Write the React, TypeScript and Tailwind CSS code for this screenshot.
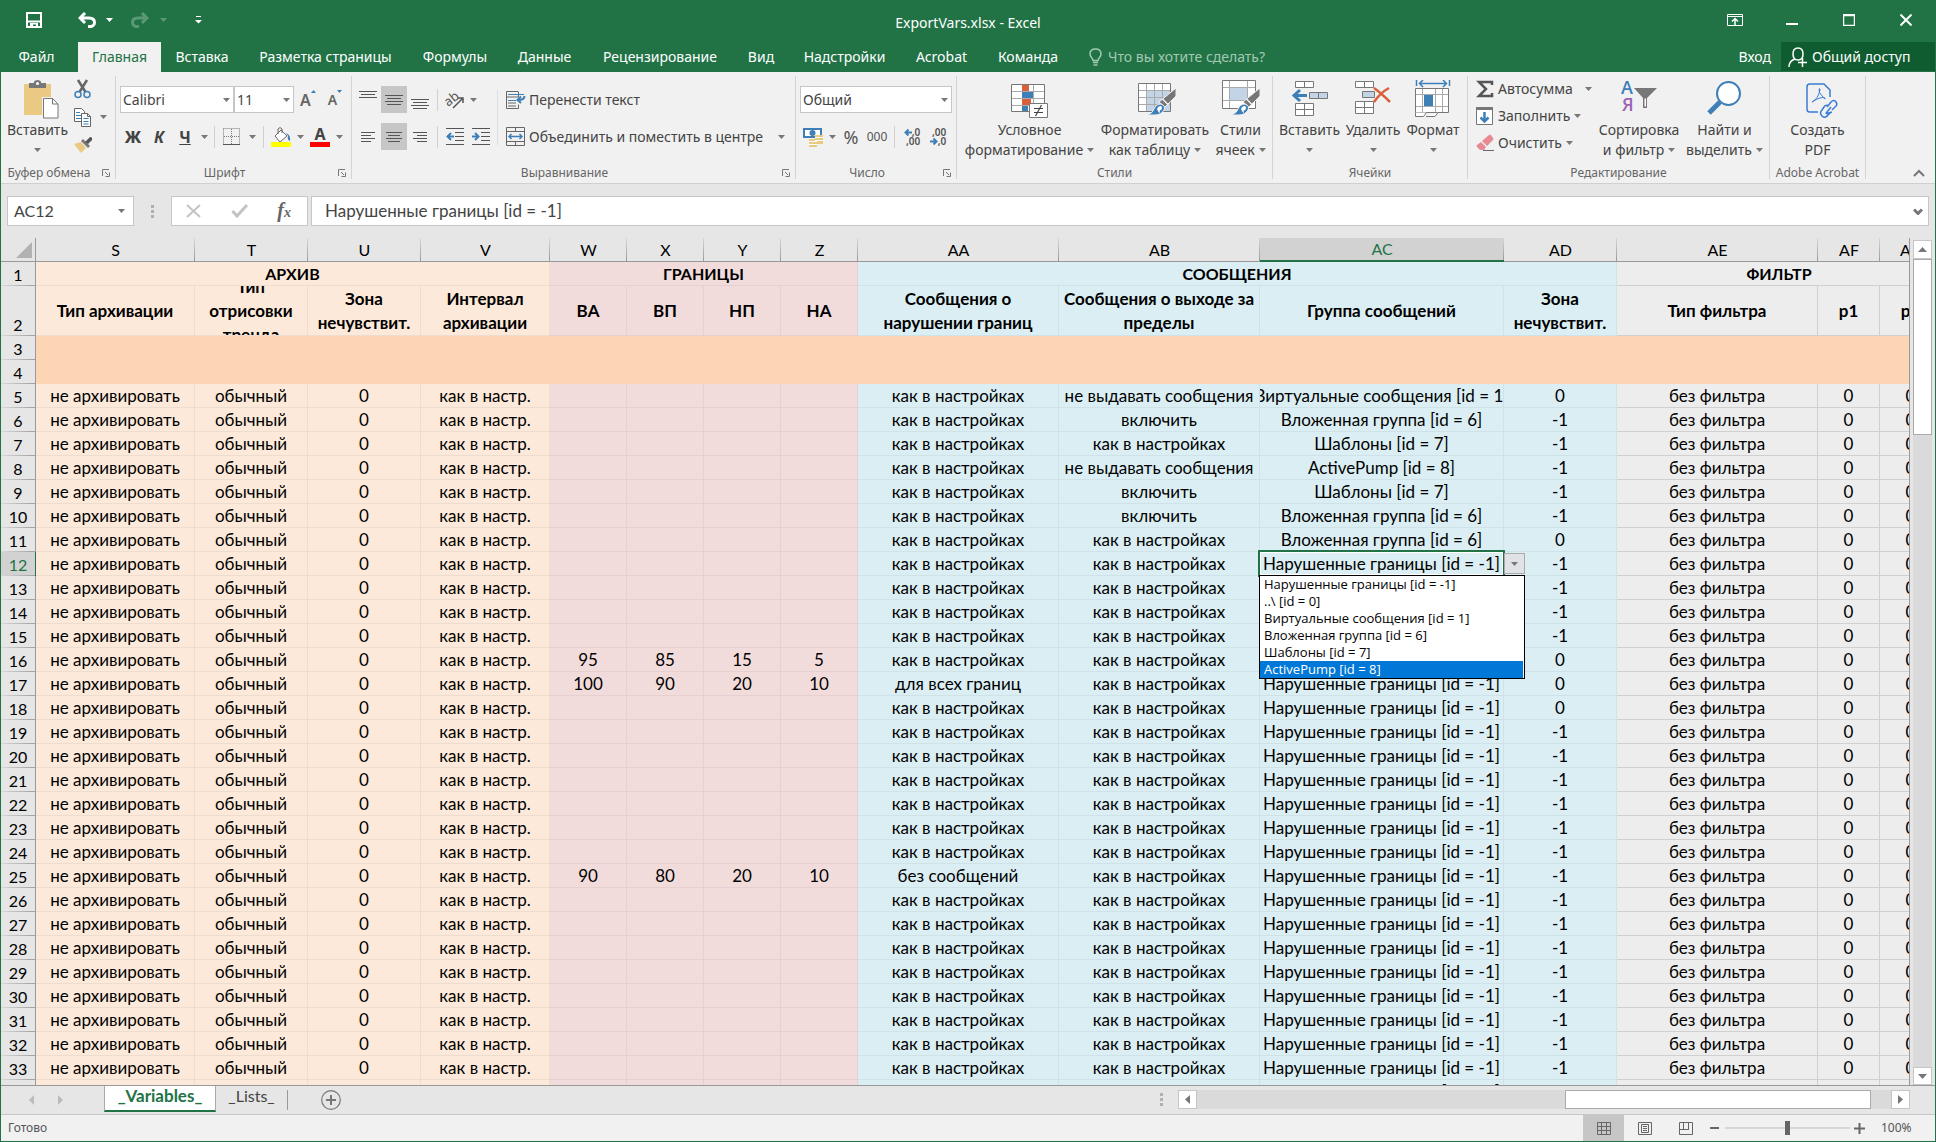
import React from 'react';

const columns = [
  { name: 'S', width: 159, tone: 'archive' },
  { name: 'T', width: 113, tone: 'archive' },
  { name: 'U', width: 113, tone: 'archive' },
  { name: 'V', width: 129, tone: 'archive' },
  { name: 'W', width: 77, tone: 'limits' },
  { name: 'X', width: 77, tone: 'limits' },
  { name: 'Y', width: 77, tone: 'limits' },
  { name: 'Z', width: 77, tone: 'limits' },
  { name: 'AA', width: 201, tone: 'messages' },
  { name: 'AB', width: 201, tone: 'messages' },
  { name: 'AC', width: 244, tone: 'messages' },
  { name: 'AD', width: 113, tone: 'messages' },
  { name: 'AE', width: 201, tone: 'filter' },
  { name: 'AF', width: 62, tone: 'filter' },
  { name: 'AG', width: 62, tone: 'filter' }
];

const tones: Record<string, string> = {
  archive: 'bg-[#fde9d9] border-[#eedccf]',
  limits: 'bg-[#f2dcdb] border-[#e6d1d0]',
  messages: 'bg-[#daeef3] border-[#cfe2e7]',
  filter: 'bg-[#ededed] border-[#d0d0d0]'
};

const groups = [
  { title: 'АРХИВ', span: 4, tone: 'archive' },
  { title: 'ГРАНИЦЫ', span: 4, tone: 'limits' },
  { title: 'СООБЩЕНИЯ', span: 4, tone: 'messages' },
  { title: 'ФИЛЬТР', span: 3, tone: 'filter' }
];

const titles = [
  'Тип архивации', 'Тип отрисовки тренда', 'Зона нечувствит.', 'Интервал архивации',
  'ВА', 'ВП', 'НП', 'НА',
  'Сообщения о нарушении границ', 'Сообщения о выходе за пределы', 'Группа сообщений', 'Зона нечувствит.',
  'Тип фильтра', 'p1', 'p2'
];

const broken = 'Нарушенные границы [id = -1]';
const virtual = 'Виртуальные сообщения [id = 1]';
const nested = 'Вложенная группа [id = 6]';
const templates = 'Шаблоны [id = 7]';
const pump = 'ActivePump [id = 8]';
const options = [broken, '..\\ [id = 0]', virtual, nested, templates, pump];

type Row = { limits?: string[]; aa?: string; ab?: string; ac?: string; ad?: string };

const overrides: Record<number, Row> = {
  5: { ab: 'не выдавать сообщения', ac: virtual, ad: '0' },
  6: { ab: 'включить', ac: nested },
  7: { ac: templates },
  8: { ab: 'не выдавать сообщения', ac: pump },
  9: { ab: 'включить', ac: templates },
  10: { ab: 'включить', ac: nested },
  11: { ac: nested, ad: '0' },
  16: { limits: ['95', '85', '15', '5'], ad: '0' },
  17: { limits: ['100', '90', '20', '10'], aa: 'для всех границ', ad: '0' },
  18: { ad: '0' },
  25: { limits: ['90', '80', '20', '10'], aa: 'без сообщений' }
};

const rows = Array.from({ length: 30 }, (_, i) => {
  const number = i + 5;
  const row = overrides[number] || {};
  return {
    number,
    cells: [
      'не архивировать', 'обычный', '0', 'как в настр.',
      ...(row.limits || ['', '', '', '']),
      row.aa || 'как в настройках',
      row.ab || 'как в настройках',
      row.ac || broken,
      row.ad || '-1',
      'без фильтра', '0', '0'
    ]
  };
});

const tabs = [
  { name: 'Вставка', width: 'w-[82px]' },
  { name: 'Разметка страницы', width: 'w-[165px]' },
  { name: 'Формулы', width: 'w-[94px]' },
  { name: 'Данные', width: 'w-[85px]' },
  { name: 'Рецензирование', width: 'w-[146px]' },
  { name: 'Вид', width: 'w-[56px]' },
  { name: 'Надстройки', width: 'w-[111px]' },
  { name: 'Acrobat', width: 'w-[83px]' },
  { name: 'Команда', width: 'w-[90px]' }
];

function Caret({ className = 'text-[#777]' }: { className?: string }) {
  return (
    <svg viewBox="0 0 7 4" className={`w-[7px] h-1 shrink-0 ${className}`} fill="currentColor">
      <path d="M0 0h7L3.5 4z" />
    </svg>
  );
}

function CaretButton({ label, width }: { label: string; width: string }) {
  return (
    <button aria-label={label} className={`h-full flex items-center justify-center ${width}`}>
      <Caret />
    </button>
  );
}

function Tool({ label, width = 'w-[26px]', active, children }: { label: string; width?: string; active?: boolean; children: React.ReactNode }) {
  return (
    <button
      aria-label={label}
      className={`h-full shrink-0 flex items-center justify-center ${width} ${active ? 'bg-[#c6c6c6]' : ''}`}
    >
      {children}
    </button>
  );
}

function Divider() {
  return <div className="w-px h-[22px] mx-1 bg-[#d0d0d0]"></div>;
}

function Combo({ label, value, className }: { label: string; value: string; className: string }) {
  return (
    <div className={`relative ${className}`}>
      <select aria-label={label} className="appearance-none w-full h-full bg-white border border-[#c6c6c6] pl-[2px] text-sm text-[#444]">
        <option>{value}</option>
      </select>
      <div className="absolute right-1 top-0 h-full flex items-center pointer-events-none">
        <Caret />
      </div>
    </div>
  );
}

function Group({ title, width, launcher, children }: { title: string; width: string; launcher?: boolean; children: React.ReactNode }) {
  return (
    <>
      <div className={`shrink-0 flex flex-col ${width}`}>
        <div className="h-[91px] flex">{children}</div>
        <div className="h-5 flex items-center text-xs text-[#666] whitespace-nowrap">
          <div className="flex-1 text-center">{title}</div>
          {launcher && (
            <button aria-label={`${title}: параметры`} className="w-[18px] shrink-0 flex justify-center">
              <svg viewBox="0 0 8 8" className="size-2" fill="none" stroke="#777">
                <path d="M.5 7V.5H7M3 3l3 3M7.5 3.500v4h-4" />
              </svg>
            </button>
          )}
        </div>
      </div>
      <div className="w-px my-1 shrink-0 bg-[#d4d4d4]"></div>
    </>
  );
}

function BigButton({ lines, width, caret = true, children }: { lines: string[]; width: string; caret?: boolean; children: React.ReactNode }) {
  return (
    <button className={`h-[91px] pt-2 shrink-0 flex flex-col items-center text-sm leading-5 text-[#444] whitespace-nowrap ${width}`}>
      <span className="h-10 flex items-start">{children}</span>
      <span>{lines[0]}</span>
      <span className="h-5 flex items-center gap-1">
        {lines[1]}
        {caret && <Caret />}
      </span>
    </button>
  );
}

function Lines({ rows: widths, y = 0, gap = 3, align = 'center' }: { rows: number[]; y?: number; gap?: number; align?: string }) {
  const x = (w: number) => (align === 'left' ? 2 : align === 'right' ? 16 - w : (18 - w) / 2);
  return (
    <svg viewBox="0 0 18 18" className="size-[18px]" stroke="#555">
      {widths.map((w, i) => (
        <path key={i} d={`M${x(w)} ${y + i * gap + 0.5}h${w}`} />
      ))}
    </svg>
  );
}

function PasteIcon() {
  return (
    <svg viewBox="0 0 35 39" className="w-[35px] h-[39px]">
      <path d="M0 4h27v31H0z" fill="#eac982" />
      <path d="M5 8V3h5V1.500Q11 0 13.500 0T17 1.500V3h5v5z" fill="#777" />
      <circle cx="13.500" cy="3.500" r="1.500" fill="#fff" />
      <path d="M18 17h10.500l6 6v15H18z" fill="#f1f1f1" />
      <path d="M19.500 18.500h9l5.500 5.500v14H19.500z" fill="#fff" stroke="#777" />
      <path d="M28.500 18.500V24H34" fill="none" stroke="#777" />
    </svg>
  );
}

function CutIcon() {
  return (
    <svg viewBox="0 0 18 20" className="w-[18px] h-5" fill="none">
      <path d="M4 1l7.500 12M13 1L5.500 13" stroke="#666" strokeWidth="2.500" />
      <circle cx="4" cy="15.500" r="3" stroke="#3e7fb8" strokeWidth="1.500" />
      <circle cx="13" cy="15.500" r="3" stroke="#3e7fb8" strokeWidth="1.500" />
    </svg>
  );
}

function CopyIcon() {
  return (
    <svg viewBox="0 0 18 19" className="w-[18px] h-[19px]" fill="#fff" stroke="#666">
      <path d="M.5.500h7l3 3v10H.5z" />
      <path d="M2 4.500h4M2 7.500h5M2 10.500h5" stroke="#3e7fb8" />
      <path d="M7.500 5.500h6l3 3v10h-9z" />
      <path d="M13.500 5.500v3h3" fill="none" />
      <path d="M9.500 10.500h5M9.500 13.500h5M9.500 16h5" stroke="#3e7fb8" />
    </svg>
  );
}

function PainterIcon() {
  return (
    <svg viewBox="0 0 18 16" className="w-[18px] h-4">
      <path d="M0 7l7-2 5 6-5 5z" fill="#eac982" />
      <path d="M7 4l2-2 7 7-2 2z" fill="#777" />
      <path d="M11 5l4-4q2-2 3 0t-1 3l-3 3z" fill="#555" />
    </svg>
  );
}

function BrushOverlay() {
  return (
    <g>
      <path d="M38 8v8L27 27l-6-5z" fill="#777" stroke="#f1f1f1" />
      <path d="M24.500 19l6 6" stroke="#f1f1f1" strokeWidth="1.500" />
      <path d="M9 35q6-2 7-6 2-5 7-5 5 2 3 6-3 5-9 5z" fill="#3e7fb8" stroke="#f1f1f1" />
      <path d="M19 29q1-3 4-3 2 2 0 4-2 0-1 3-2-1-3-4z" fill="#fff" />
    </g>
  );
}

function ConditionalIcon() {
  return (
    <svg viewBox="0 0 38 38" className="w-[38px] h-[38px]">
      <path d="M.5 4.500h33v27H.5z" fill="#fff" stroke="#777" />
      <path d="M1 11.500h32M1 18.500h32M1 25.500h32M11.500 5v26M22.500 5v26" stroke="#aaa" />
      <path d="M11 5h7v6h-7zM11 19h9v6h-9z" fill="#d9603b" />
      <path d="M11 12h11v6H11zM11 26h6v5h-6z" fill="#3e7fb8" />
      <path d="M18.500 23.500h18v14h-18z" fill="#fff" stroke="#777" />
      <path d="M23 28.500h9M23 32.500h9M30.500 25l-6 11" stroke="#444" strokeWidth="1.200" />
    </svg>
  );
}

function FormatTableIcon() {
  return (
    <svg viewBox="0 0 38 38" className="w-[38px] h-[38px]">
      <path d="M.5 3.500h32v28H.5z" fill="#fff" stroke="#777" />
      <path d="M9 11h23v20H9z" fill="#c3d4e7" />
      <path d="M1 10.500h31M1 17.500h31M1 24.500h31M8.500 4v27M16.500 4v27M24.500 4v27" stroke="#aaa" />
      <BrushOverlay />
    </svg>
  );
}

function CellStylesIcon() {
  return (
    <svg viewBox="0 0 38 38" className="w-[38px] h-[38px]">
      <path d="M.5.500h33v28H.5z" fill="#fff" stroke="#777" />
      <path d="M1 7.500h32M1 20.500h32M7.500 1v27M25.500 1v27" stroke="#aaa" />
      <path d="M8 8h17v12H8z" fill="#c3d4e7" />
      <BrushOverlay />
    </svg>
  );
}

function InsertIcon() {
  return (
    <svg viewBox="0 0 36 38" className="w-9 h-[38px]" fill="#fff" stroke="#777">
      <path d="M3.500 1.500h18v6h-18zM12.500 1.500v6M3.500 23.500h18v12h-18zM12.500 23.500v12M3.500 29.500h18" />
      <path d="M17.500 12.500h18v6h-18zM26.500 12.500v6" fill="#c3d4e7" />
      <path d="M15 15.500H2M8 10l-6 5.500L8 21" fill="none" stroke="#3e7fb8" strokeWidth="3" />
    </svg>
  );
}

function DeleteIcon() {
  return (
    <svg viewBox="0 0 36 38" className="w-9 h-[38px]" fill="#fff" stroke="#777">
      <path d="M.5 1.500h18v6H.5zM9.500 1.500v6M.5 21.500h18v12H.5zM9.500 21.500v12M.5 27.500h18" />
      <path d="M7.500 11.500h12v6h-12z" fill="#c3d4e7" />
      <path d="M19 8q7 5 16 14M34 8q-9 5-15 14" fill="none" stroke="#d9603b" strokeWidth="2.500" />
    </svg>
  );
}

function FormatIcon() {
  return (
    <svg viewBox="0 0 36 38" className="w-9 h-[38px]" fill="#fff">
      <path d="M1.500 0v6M34.500 0v6M4 3.500h28M8 0L4.500 3.500 8 7M28 0l3.500 3.500L28 7" fill="none" stroke="#3e7fb8" strokeWidth="1.500" />
      <path d="M.5 8.500h33v24H.5z" stroke="#777" />
      <path d="M1 14.500h32M1 26.500h32M7.500 9v23M20.500 9v23M27.500 9v23" stroke="#aaa" />
      <path d="M9 15h9v11H9z" fill="#3e7fb8" />
      <path d="M.5 32.500v4h8l3-4M11 36.500h9l3-4" stroke="#777" />
    </svg>
  );
}

function SortIcon() {
  return (
    <svg viewBox="0 0 36 36" className="w-9 h-9">
      <g fontFamily="Open Sans, sans-serif" fontWeight="600" fontSize="18">
        <text x="0" y="14" fill="#3e7fb8">А</text>
        <text x="1" y="31" fill="#9b66b5">Я</text>
      </g>
      <path d="M13 8h23L26 18v10h-4V18z" fill="#777" />
      <path d="M23.500 18.500h1.500v8h-1.500z" fill="#fff" />
    </svg>
  );
}

function FindIcon() {
  return (
    <svg viewBox="0 0 35 36" className="w-[35px] h-9">
      <path d="M13 22L2 33" stroke="#3e7fb8" strokeWidth="5" />
      <circle cx="21.500" cy="13.500" r="11.500" fill="#fff" stroke="#3e7fb8" strokeWidth="2" />
    </svg>
  );
}

function PdfIcon() {
  return (
    <svg viewBox="0 0 32 38" className="w-8 h-[38px]" fill="none" stroke="#3a7bd5" strokeWidth="1.500">
      <path d="M12 32H3.500Q1 32 1 29V7q0-3 2.500-3H18l6 6v7" />
      <path d="M6 22q6-3 8-12 0-2-1-1-1 3 4 8 3 3 2 1-4-2-13 4z" strokeWidth="1" />
      <path d="M21 27l4-5q3-3 5 0t-1 5l-3 3M25 27l-4 5q-3 3 5 0M23 26q-3-2-5 1l-2 3q-3 3 0 6t6-1l2-2" />
    </svg>
  );
}

function TitleBar() {
  return (
    <div className="h-[42px] grid grid-cols-[1fr_auto_1fr] text-white">
      <div className="flex items-center pl-[25px] pb-[2px]">
        <button aria-label="Сохранить">
          <svg viewBox="0 0 16 16" className="size-4" fill="none" stroke="currentColor" strokeWidth="2">
            <path d="M1 1h14v14H1zM2 9.500h12" />
            <path d="M4 11h8v4h-2v-2.500H7V15H4z" fill="currentColor" stroke="none" />
          </svg>
        </button>
        <button aria-label="Отменить" className="ml-9">
          <svg viewBox="0 0 18 16" className="w-[18px] h-4" fill="none" stroke="currentColor" strokeWidth="3">
            <path d="M1.500 6H11q5.500 0 5.500 4.500T10 14.500M7 1L2 6l5 5" />
          </svg>
        </button>
        <button aria-label="Список отмены" className="ml-[10px]"><Caret className="text-white" /></button>
        <button aria-label="Вернуть" className="ml-[18px] text-[#5a9876]">
          <svg viewBox="0 0 18 16" className="w-[18px] h-4" fill="none" stroke="currentColor" strokeWidth="3">
            <path d="M16.500 6H7q-5.500 0-5.500 4.500T8 14.500M11 1l5 5-5 5" />
          </svg>
        </button>
        <button aria-label="Список возврата" className="ml-[11px]"><Caret className="text-[#5a9876]" /></button>
        <button aria-label="Настройка панели" className="ml-7">
          <svg viewBox="0 0 7 8" className="w-[7px] h-2" fill="currentColor">
            <path d="M1 0h5v1H1zM0 4h7L3.500 7.500z" />
          </svg>
        </button>
      </div>
      <div className="pt-[13px] text-sm leading-5">ExportVars.xlsx - Excel</div>
      <div className="flex items-center justify-end pr-[23px] pb-[2px]">
        <button aria-label="Параметры ленты" className="mr-[43px]">
          <svg viewBox="0 0 16 12" className="w-4 h-3" fill="none" stroke="currentColor">
            <path d="M.5.500h15v11H.5zM0 2.500h16" />
            <path d="M8 11V5M5 7.500L8 4.500l3 3" strokeWidth="1.500" />
          </svg>
        </button>
        <button aria-label="Свернуть" className="mr-[45px]">
          <svg viewBox="0 0 12 12" className="size-3"><path d="M0 9h12v2H0z" fill="currentColor" /></svg>
        </button>
        <button aria-label="Развернуть" className="mr-[45px]">
          <svg viewBox="0 0 12 12" className="size-3"><path d="M.5.500h11v11H.5zM0 1.500h12" fill="none" stroke="currentColor" strokeWidth="1.500" /></svg>
        </button>
        <button aria-label="Закрыть">
          <svg viewBox="0 0 12 12" className="size-3"><path d="M.5.500l11 11M11.500.500l-11 11" stroke="currentColor" strokeWidth="2" /></svg>
        </button>
      </div>
    </div>
  );
}

function TabBar() {
  return (
    <div className="h-[30px] flex text-sm text-white whitespace-nowrap">
      <button className="w-[77px] pr-[6px]">Файл</button>
      <button className="w-[83px] bg-[#f1f1f1] text-[#217346]">Главная</button>
      {tabs.map((tab) => (
        <button key={tab.name} className={`shrink-0 ${tab.width}`}>{tab.name}</button>
      ))}
      <button className="ml-4 flex items-center gap-[6px] text-[#a3c9b2]">
        <svg viewBox="0 0 13 18" className="w-[13px] h-[18px]" fill="none" stroke="currentColor" strokeWidth="1.500">
          <path d="M4 12.500Q4 11 2.500 9.500 1 8 1 6q0-5 5.500-5T12 6q0 2-1.500 3.500T9 12.500zM4 14.500h5M4.500 17h4" />
        </svg>
        Что вы хотите сделать?
      </button>
      <div className="flex-1"></div>
      <button className="px-[10px]">Вход</button>
      <button className="w-[154px] mb-px pl-[7px] flex items-center gap-1 bg-[#0e5c2f]">
        <svg viewBox="0 0 20 20" className="size-5" fill="none" stroke="currentColor" strokeWidth="1.500">
          <path d="M5 7q0-6 5-6t5 6-5 6-5-6M1 20q0-6 6-8M10 15.500h9M14.500 11v9" />
        </svg>
        Общий доступ
      </button>
    </div>
  );
}

function Ribbon() {
  return (
    <div className="flex bg-[#f1f1f1] border-b border-[#d0d0d0]">
      <Group title="Буфер обмена" width="w-[114px]" launcher>
        <BigButton lines={['Вставить', '']} width="w-[73px]">
          <span className="pl-2"><PasteIcon /></span>
        </BigButton>
        <div className="flex flex-col pt-[3px]">
          <button aria-label="Вырезать" className="h-7 flex items-center"><CutIcon /></button>
          <button aria-label="Копировать" className="h-7 flex items-center gap-2"><CopyIcon /><Caret /></button>
          <button aria-label="Формат по образцу" className="h-7 flex items-center"><PainterIcon /></button>
        </div>
      </Group>

      <Group title="Шрифт" width="w-[235px]" launcher>
        <div className="pt-[14px] pl-1 flex flex-col gap-[10px]">
          <div className="h-[27px] flex">
            <Combo label="Шрифт" value="Calibri" className="w-[114px]" />
            <Combo label="Размер шрифта" value="11" className="w-[60px]" />
            <Tool label="Увеличить размер" width="w-7">
              <span className="text-base font-semibold text-[#666]">A</span>
              <svg viewBox="0 0 5 16" className="w-[5px] h-4 mb-1"><path d="M0 3h5L2.500 0z" fill="#3e7fb8" /></svg>
            </Tool>
            <Tool label="Уменьшить размер">
              <span className="text-sm font-semibold text-[#666]">A</span>
              <svg viewBox="0 0 5 16" className="w-[5px] h-4 mb-1"><path d="M0 0h5L2.500 3z" fill="#3e7fb8" /></svg>
            </Tool>
          </div>
          <div className="h-[27px] flex items-center text-base text-[#444]">
            <Tool label="Полужирный"><b className="font-extrabold">Ж</b></Tool>
            <Tool label="Курсив"><b className="italic">К</b></Tool>
            <Tool label="Подчеркнутый"><b className="underline">Ч</b></Tool>
            <CaretButton label="Виды подчеркивания" width="w-3" />
            <Divider />
            <Tool label="Границы">
              <svg viewBox="0 0 18 18" className="size-[18px]" fill="none" stroke="#777">
                <path d="M.5.500h16v16M.5.500v16M8.500 1v16M1 8.500h16" strokeDasharray="1 1" />
                <path d="M0 16.500h17" stroke="#555" />
              </svg>
            </Tool>
            <CaretButton label="Виды границ" width="w-[14px]" />
            <Divider />
            <Tool label="Цвет заливки">
              <svg viewBox="0 0 20 20" className="size-5">
                <path d="M4 9l6-6 6 6-7 6z" fill="#fff" stroke="#666" />
                <path d="M7 7V2q2-3 4 0v4" fill="none" stroke="#666" />
                <path d="M15 6q5 2 4 8-3-1-2-5z" fill="#3e7fb8" />
                <path d="M0 15h20v5H0z" fill="#ff0" />
              </svg>
            </Tool>
            <CaretButton label="Выбор заливки" width="w-3" />
            <Tool label="Цвет текста" width="w-7">
              <span className="flex flex-col items-center">
                <span className="text-base leading-[15px] font-bold">A</span>
                <span className="w-5 h-[5px] bg-[#f00]"></span>
              </span>
            </Tool>
            <CaretButton label="Выбор цвета текста" width="w-[10px]" />
          </div>
        </div>
      </Group>

      <Group title="Выравнивание" width="w-[443px]" launcher>
        <div className="pt-[14px] pl-[3px] flex flex-col gap-[10px]">
          <div className="h-[27px] flex items-center">
            <Tool label="По верхнему краю"><Lines rows={[18, 14, 18]} /></Tool>
            <Tool label="По середине" active><Lines rows={[18, 14, 18, 14]} y={4} /></Tool>
            <Tool label="По нижнему краю"><Lines rows={[18, 14, 18, 14]} y={8} /></Tool>
            <Divider />
            <Tool label="Ориентация">
              <svg viewBox="0 0 20 18" className="w-5 h-[18px]" fill="none" stroke="#555" strokeWidth="1.500">
                <text x="0" y="13" fontSize="13" fill="#555" stroke="none" transform="rotate(-38 6 10)">ab</text>
                <path d="M8 17L18 7M13 7h5v5" />
              </svg>
            </Tool>
            <CaretButton label="Виды ориентации" width="w-[10px]" />
          </div>
          <div className="h-[27px] flex items-center">
            <Tool label="По левому краю"><Lines rows={[14, 10, 14, 10]} y={4} align="left" /></Tool>
            <Tool label="По центру" active><Lines rows={[16, 12, 16, 12]} y={4} /></Tool>
            <Tool label="По правому краю"><Lines rows={[14, 10, 14, 10]} y={4} align="right" /></Tool>
            <Divider />
            <Tool label="Уменьшить отступ">
              <svg viewBox="0 0 18 17" className="w-[18px] h-[17px]" fill="none" stroke="#555">
                <path d="M0 .500h18M9 4.500h9M9 8.500h9M9 12.500h9M0 16.500h18" />
                <path d="M8 8.500H1.500M5 5L1.500 8.500 5 12" stroke="#3e7fb8" strokeWidth="2" />
              </svg>
            </Tool>
            <Tool label="Увеличить отступ">
              <svg viewBox="0 0 18 17" className="w-[18px] h-[17px]" fill="none" stroke="#555">
                <path d="M0 .500h18M9 4.500h9M9 8.500h9M9 12.500h9M0 16.500h18" />
                <path d="M0 8.500h6.500M3 5l3.500 3.500L3 12" stroke="#3e7fb8" strokeWidth="2" />
              </svg>
            </Tool>
          </div>
        </div>
        <div className="w-px h-[55px] mt-[18px] mr-2 ml-[3px] bg-[#dcdfe8]"></div>
        <div className="pt-[14px] flex flex-col gap-[10px] text-sm text-[#444] whitespace-nowrap">
          <button className="h-[27px] flex items-center gap-[3px]">
            <svg viewBox="0 0 20 18" className="w-5 h-[18px]" fill="none" stroke="#666">
              <path d="M12 .500H.5v17h12v-4M.5 6h12V.500M2 12h8M2 15h8" />
              <path d="M2 3.500h16M2 9.500h8" stroke="#3e7fb8" />
              <path d="M18.500 5q0 4-6 4M15 5.500l-3.500 3.500 3.500 3" stroke="#3e7fb8" strokeWidth="2" />
            </svg>
            Перенести текст
          </button>
          <div className="h-[27px] flex items-center gap-3">
            <button className="flex items-center gap-[3px]">
              <svg viewBox="0 0 20 19" className="w-5 h-[19px]" fill="none" stroke="#666">
                <path d="M.5.500h18v18H.5zM0 4.500h19M0 14.500h19M9.500 0v4M9.500 15v4" />
                <path d="M3 9.500h13M5.500 7L3 9.500 5.500 12M13.500 7L16 9.500 13.500 12" stroke="#3e7fb8" strokeWidth="1.500" />
              </svg>
              Объединить и поместить в центре
            </button>
            <CaretButton label="Виды объединения" width="w-3" />
          </div>
        </div>
      </Group>

      <Group title="Число" width="w-[160px]" launcher>
        <div className="pt-[14px] pl-1 flex flex-col gap-[10px]">
          <div className="h-[27px]">
            <Combo label="Числовой формат" value="Общий" className="w-[152px] h-full" />
          </div>
          <div className="h-[27px] flex items-center text-[#555]">
            <Tool label="Финансовый формат">
              <svg viewBox="0 0 20 20" className="size-5">
                <path d="M0 1h19v10H0z" fill="#3e7fb8" />
                <path d="M2 3h15v6H2z" fill="#fff" />
                <circle cx="9.500" cy="6" r="3" fill="#3e7fb8" />
                <path d="M12 8h8v9h-6v3H6v-8h6z" fill="#eac982" />
                <path d="M12 10.500h8M12 13.500h8M6 14.500h8M6 17.500h8" stroke="#fff" />
              </svg>
            </Tool>
            <CaretButton label="Выбор валюты" width="w-3" />
            <Tool label="Процентный формат"><span className="text-lg">%</span></Tool>
            <Tool label="Формат с разделителями"><span className="text-xs">000</span></Tool>
            <Divider />
            <Tool label="Увеличить разрядность">
              <span className="flex flex-col items-end text-[10px] leading-[9px] font-semibold">
                <span className="flex items-center">
                  <svg viewBox="0 0 8 7" className="w-2 h-[7px]" fill="none" stroke="#3e7fb8" strokeWidth="2"><path d="M8 3.500H1.500M4.500.500l-3 3 3 3" /></svg>
                  ,0
                </span>
                <span>,00</span>
              </span>
            </Tool>
            <Tool label="Уменьшить разрядность">
              <span className="flex flex-col items-end text-[10px] leading-[9px] font-semibold">
                <span>,00</span>
                <span className="flex items-center">
                  <svg viewBox="0 0 8 7" className="w-2 h-[7px]" fill="none" stroke="#3e7fb8" strokeWidth="2"><path d="M0 3.500h6.500M3.500.500l3 3-3 3" /></svg>
                  ,0
                </span>
              </span>
            </Tool>
          </div>
        </div>
      </Group>

      <Group title="Стили" width="w-[315px]">
        <div className="pl-[3px] flex">
          <BigButton lines={['Условное', 'форматирование']} width="w-[139px]"><ConditionalIcon /></BigButton>
          <BigButton lines={['Форматировать', 'как таблицу']} width="w-[112px]"><span className="pl-1"><FormatTableIcon /></span></BigButton>
          <BigButton lines={['Стили', 'ячеек']} width="w-[59px]"><CellStylesIcon /></BigButton>
        </div>
      </Group>

      <Group title="Ячейки" width="w-[194px]">
        <div className="pl-1 flex">
          <BigButton lines={['Вставить', '']} width="w-[65px]"><InsertIcon /></BigButton>
          <BigButton lines={['Удалить', '']} width="w-[62px]"><DeleteIcon /></BigButton>
          <BigButton lines={['Формат', '']} width="w-[58px]"><FormatIcon /></BigButton>
        </div>
      </Group>

      <Group title="Редактирование" width="w-[301px]">
        <div className="w-[128px] pl-2 pt-[3px] shrink-0 flex flex-col text-sm text-[#444]">
          <button className="h-[27px] flex items-center gap-1">
            <svg viewBox="0 0 18 18" className="size-[18px]" fill="none" stroke="#555" strokeWidth="2.500">
              <path d="M16 5V2H3l7 7-7 7h13v-3" />
            </svg>
            Автосумма
            <span className="ml-2"><Caret /></span>
          </button>
          <button className="h-[27px] flex items-center gap-1">
            <svg viewBox="0 0 18 18" className="size-[18px]">
              <path d="M.5.500h16v17H.5z" fill="#fff" stroke="#777" />
              <path d="M0 0h17v3H0z" fill="#777" />
              <path d="M8.500 5v9M4.500 10.500l4 4 4-4" fill="none" stroke="#3e7fb8" strokeWidth="2.500" />
            </svg>
            Заполнить
            <Caret />
          </button>
          <button className="h-[27px] flex items-center gap-1">
            <svg viewBox="0 0 18 18" className="size-[18px]">
              <path d="M6 7l7-6q1-1 2 0l2 3q1 1 0 2l-6 6z" fill="#e88a94" />
              <path d="M5 8l5 5-2 3H4l-3-3q-1-1 0-2z" fill="#e88a94" />
              <path d="M7 16.500h11" stroke="#666" />
            </svg>
            Очистить
            <Caret />
          </button>
        </div>
        <BigButton lines={['Сортировка', 'и фильтр']} width="w-[86px]"><SortIcon /></BigButton>
        <BigButton lines={['Найти и', 'выделить']} width="w-[85px]"><FindIcon /></BigButton>
      </Group>

      <Group title="Adobe Acrobat" width="w-[95px]">
        <BigButton lines={['Создать', 'PDF']} width="w-full" caret={false}><span className="pl-2"><PdfIcon /></span></BigButton>
      </Group>

      <button aria-label="Свернуть ленту" className="ml-auto mr-[10px] mb-[6px] self-end">
        <svg viewBox="0 0 12 8" className="w-3 h-2" fill="none" stroke="#777" strokeWidth="2">
          <path d="M1 7l5-5 5 5" />
        </svg>
      </button>
    </div>
  );
}

function FormulaBar() {
  return (
    <div className="flex items-stretch h-[54px] py-3 pl-[6px] pr-[6px]">
      <div className="w-[127px] flex items-center bg-white border border-[#c6c6c6]">
        <input aria-label="Имя ячейки" defaultValue="AC12" className="min-w-0 flex-1 pl-[6px] text-base text-[#444] font-[Lato,sans-serif]" />
        <CaretButton label="Список имен" width="w-6" />
      </div>
      <div className="w-[37px] flex flex-col items-center justify-center gap-[2px]">
        <i className="size-[3px] bg-[#b0b0b0]"></i>
        <i className="size-[3px] bg-[#b0b0b0]"></i>
        <i className="size-[3px] bg-[#b0b0b0]"></i>
      </div>
      <div className="w-[137px] pl-[13px] pr-4 flex items-center justify-between bg-white border border-[#c6c6c6]">
        <button aria-label="Отмена">
          <svg viewBox="0 0 18 14" className="w-[18px] h-[14px]"><path d="M2 1l13 12M15 1L2 13" stroke="#c3c3c3" strokeWidth="2" /></svg>
        </button>
        <button aria-label="Ввод">
          <svg viewBox="0 0 18 14" className="w-[18px] h-[14px]" fill="none"><path d="M1.500 7l4.500 5L16 1" stroke="#c3c3c3" strokeWidth="3" /></svg>
        </button>
        <button aria-label="Вставить функцию" className="font-['Liberation_Serif',serif] italic font-bold text-xl leading-5 text-[#666]">
          f<span className="text-sm">x</span>
        </button>
      </div>
      <div className="flex-1 ml-[3px] flex items-center bg-white border border-[#c6c6c6]">
        <input aria-label="Строка формул" defaultValue={broken} className="flex-1 pl-[13px] text-[17px] text-[#444] font-[Lato,sans-serif]" />
        <button aria-label="Развернуть строку формул" className="w-[15px]">
          <svg viewBox="0 0 10 7" className="w-[10px] h-[7px]" fill="none" stroke="#777" strokeWidth="3"><path d="M1 1.500l4 4 4-4" /></svg>
        </button>
      </div>
    </div>
  );
}

function RowHeader({ number, selected }: { number: number; selected?: boolean }) {
  return (
    <th
      scope="row"
      className={`relative p-0 align-bottom text-base leading-[23px] font-normal border-r after:absolute after:inset-x-0 after:bottom-0 after:h-px after:bg-linear-to-r after:from-[#d8d8d8] after:to-[#a0a0a0] ${
        selected ? 'bg-[#d2d2d2] text-[#217346] border-[#217346]' : 'bg-[#e6e6e6] border-[#999]'
      }`}
    >
      {number}
    </th>
  );
}

function ActiveCell() {
  return (
    <>
      <div className="absolute -inset-[2px] border-2 border-[#217346] pointer-events-none">
        <div className="h-full border border-white"></div>
      </div>
      <button aria-label="Открыть список" className="absolute left-[calc(100%+1px)] top-px z-10 w-[21px] h-[21px] flex items-center justify-center bg-[#e1e1e8] border border-[#aaa]">
        <Caret />
      </button>
      <ul role="listbox" aria-label="Группа сообщений" className="absolute -left-px top-[23px] z-10 w-[266px] pr-px bg-white border border-black text-left text-[13px] leading-[17px] font-['Open_Sans',sans-serif]">
        {options.map((option) => (
          <li
            key={option}
            role="option"
            aria-selected={option === pump}
            className={`pl-1 ${option === pump ? 'bg-[#0078d7] text-white' : ''}`}
          >
            {option}
          </li>
        ))}
      </ul>
    </>
  );
}

function Sheet() {
  return (
    <div className="flex-1 min-h-0 flex border-b border-[#999]">
      <div className="flex-1 min-w-0 overflow-hidden border-r border-[#999] font-[Lato,sans-serif] text-base text-black">
        <table className="table-fixed w-[1941px] border-separate border-spacing-0 text-center">
          <colgroup>
            <col style={{ width: 35 }} />
            {columns.map((column) => (
              <col key={column.name} style={{ width: column.width }} />
            ))}
          </colgroup>
          <thead>
            <tr className="h-6">
              <th aria-label="Выделить все" className="p-0 border-b border-r border-[#999] bg-[#e6e6e6]">
                <svg viewBox="0 0 16 16" className="size-4 ml-auto mr-[3px]"><path d="M16 0v16H0z" fill="#b2b2b2" /></svg>
              </th>
              {columns.map((column) => (
                <th
                  key={column.name}
                  scope="col"
                  className={`relative p-0 leading-[22px] font-normal after:absolute after:right-0 after:inset-y-0 after:w-px after:bg-linear-to-b after:from-[#d8d8d8] after:to-[#999] ${
                    column.name === 'AC' ? 'bg-[#d2d2d2] text-[#217346] border-b-2 border-[#217346]' : 'bg-[#e6e6e6] border-b border-[#999]'
                  }`}
                >
                  {column.name}
                </th>
              ))}
            </tr>
          </thead>
          <tbody>
            <tr className="h-6">
              <RowHeader number={1} />
              {groups.map((group) => (
                <th key={group.title} colSpan={group.span} className={`p-0 leading-[23px] font-bold border-r border-b ${tones[group.tone]}`}>
                  {group.title}
                </th>
              ))}
            </tr>
            <tr className="h-[50px]">
              <RowHeader number={2} />
              {titles.map((title, index) => (
                <th key={index} className={`p-0 text-[17px] font-bold border-r border-b ${tones[columns[index].tone]}`}>
                  <div className="h-[49px] px-1 flex items-center justify-center overflow-hidden leading-6">{title}</div>
                </th>
              ))}
            </tr>
            {[3, 4].map((number) => (
              <tr key={number} className="h-6">
                <RowHeader number={number} />
                <td colSpan={15} className="p-0 bg-[#fcd5b4]"></td>
              </tr>
            ))}
            {rows.map((row) => (
              <tr key={row.number} className="h-6">
                <RowHeader number={row.number} selected={row.number === 12} />
                {row.cells.map((cell, index) => {
                  const active = row.number === 12 && columns[index].name === 'AC';
                  return (
                    <td key={index} className={`p-0 text-[17px] border-r border-b ${active ? 'relative' : ''} ${tones[columns[index].tone]}`}>
                      <div className="h-[23px] flex justify-center overflow-hidden whitespace-nowrap leading-[23px]">{cell}</div>
                      {active && <ActiveCell />}
                    </td>
                  );
                })}
              </tr>
            ))}
          </tbody>
        </table>
      </div>

      {/* Vertical scroll bar */}
      <div className="w-[25px] shrink-0 pt-[2px] pl-[3px] pr-[3px] flex flex-col">
        <button aria-label="Вверх" className="h-[19px] shrink-0 flex items-center justify-center bg-white border border-[#c6c6c6]">
          <svg viewBox="0 0 9 5" className="w-[9px] h-[5px]"><path d="M0 5h9L4.500 0z" fill="#777" /></svg>
        </button>
        <div className="flex-1 bg-[#dadada]">
          <div className="h-[176px] bg-white border border-[#aaa]"></div>
        </div>
        <button aria-label="Вниз" className="h-[18px] shrink-0 flex items-center justify-center bg-white border border-[#c6c6c6]">
          <svg viewBox="0 0 9 5" className="w-[9px] h-[5px]"><path d="M0 0h9L4.500 5z" fill="#777" /></svg>
        </button>
      </div>
    </div>
  );
}

function SheetTabs() {
  return (
    <div className="h-[29px] shrink-0 flex border-b border-[#c6c6c6] font-[Lato,sans-serif] text-[17px] text-[#444]">
      <div className="w-[103px] flex items-center pl-7 gap-6">
        <button aria-label="Предыдущий лист"><svg viewBox="0 0 5 10" className="w-[5px] h-[10px]"><path d="M5 0v10L0 5z" fill="#bbb" /></svg></button>
        <button aria-label="Следующий лист"><svg viewBox="0 0 5 10" className="w-[5px] h-[10px]"><path d="M0 0v10l5-5z" fill="#bbb" /></svg></button>
      </div>
      <button className="w-28 h-[26px] pb-1 bg-white border-x border-x-[#aaa] border-b-2 border-b-[#217346] font-bold leading-5 text-[#217346]">_Variables_</button>
      <button className="w-[71px] h-5 text-base leading-5">_Lists_</button>
      <div className="w-px h-5 mt-1 bg-[#999]"></div>
      <button aria-label="Новый лист" className="ml-[33px] self-center">
        <svg viewBox="0 0 20 20" className="size-5" fill="none" stroke="#777">
          <circle cx="10" cy="10" r="9.300" strokeWidth="1.200" />
          <path d="M5 10h10M10 5v10" strokeWidth="2" />
        </svg>
      </button>
      <div className="flex-1"></div>
      <div className="w-[751px] shrink-0 pt-1 pb-[5px] flex">
        <div className="w-1 mr-[15px] flex flex-col items-center justify-center gap-[2px]">
          <i className="size-[3px] bg-[#b0b0b0]"></i>
          <i className="size-[3px] bg-[#b0b0b0]"></i>
          <i className="size-[3px] bg-[#b0b0b0]"></i>
        </div>
        <button aria-label="Влево" className="w-[19px] flex items-center justify-center bg-white border border-[#c6c6c6]">
          <svg viewBox="0 0 5 9" className="w-[5px] h-[9px]"><path d="M5 0v9L0 4.500z" fill="#777" /></svg>
        </button>
        <div className="flex-1 flex justify-end pr-5 bg-[#dadada]">
          <div className="w-[306px] bg-white border border-[#aaa]"></div>
        </div>
        <button aria-label="Вправо" className="w-[19px] flex items-center justify-center bg-white border border-[#c6c6c6]">
          <svg viewBox="0 0 5 9" className="w-[5px] h-[9px]"><path d="M0 0v9l5-4.500z" fill="#777" /></svg>
        </button>
      </div>
      <div className="w-[25px]"></div>
    </div>
  );
}

function StatusBar() {
  return (
    <div className="h-[26px] shrink-0 flex items-center bg-[#f1f1f1] text-xs text-[#555]">
      <div className="flex-1 pl-[7px]">Готово</div>
      <div className="h-full flex">
        <Tool label="Обычный" width="w-[41px]" active>
          <svg viewBox="0 0 14 13" className="w-[14px] h-[13px]" fill="none" stroke="#666"><path d="M.5.500h13v12H.5zM0 4.500h14M0 8.500h14M4.500 0v13M9.500 0v13" /></svg>
        </Tool>
        <Tool label="Разметка страницы" width="w-[41px]">
          <svg viewBox="0 0 14 13" className="w-[14px] h-[13px]" fill="none" stroke="#666"><path d="M.5.500h13v12H.5zM3.500 2.500h7v8h-7zM5 4.500h4M5 6.500h4M5 8.500h4" /></svg>
        </Tool>
        <Tool label="Страничный режим" width="w-[41px]">
          <svg viewBox="0 0 14 13" className="w-[14px] h-[13px]" fill="none" stroke="#666"><path d="M.5.500h13v12H.5zM4.500 0v7.500M9.500 0v7.500M0 7.500h10" /></svg>
        </Tool>
      </div>
      <button aria-label="Уменьшить" className="ml-1 w-[11px] h-4 flex items-center"><i className="w-[9px] h-[2px] bg-[#666]"></i></button>
      <input
        type="range"
        aria-label="Масштаб"
        defaultValue={50}
        className="appearance-none ml-1 w-[125px] h-4 bg-linear-to-b from-transparent from-45% via-[#aaa] via-50% to-transparent to-55% [&::-webkit-slider-thumb]:appearance-none [&::-webkit-slider-thumb]:w-[5px] [&::-webkit-slider-thumb]:h-[14px] [&::-webkit-slider-thumb]:bg-[#666]"
      />
      <button aria-label="Увеличить" className="ml-1">
        <svg viewBox="0 0 11 11" className="size-[11px]"><path d="M0 5.500h11M5.500 0v11" stroke="#666" strokeWidth="2" /></svg>
      </button>
      <div className="w-[70px] pl-4">100%</div>
    </div>
  );
}

export default function App() {
  return (
    <div className="h-screen flex flex-col overflow-hidden bg-[#e6e6e6] border-x border-b border-[#217346] font-['Noto_Sans',sans-serif]">
      <div className="shrink-0 bg-[#217346]">
        <TitleBar />
        <TabBar />
      </div>
      <Ribbon />
      <FormulaBar />
      <Sheet />
      <SheetTabs />
      <StatusBar />
    </div>
  );
}
